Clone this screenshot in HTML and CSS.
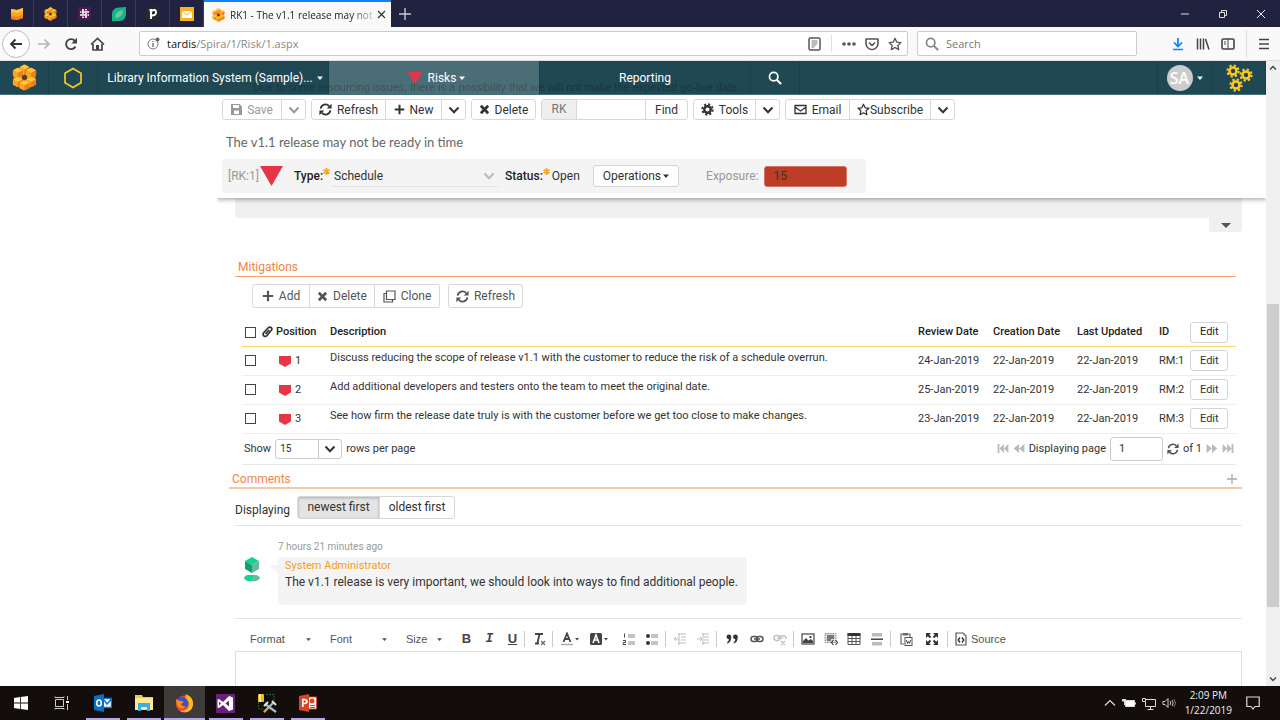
FILE: index.html
```html
<!DOCTYPE html>
<html lang="en">
<head>
<meta charset="utf-8">
<title>RK1 - The v1.1 release may not be ready in time</title>
<link rel="stylesheet" href="styles.css">
</head>
<body>
<svg class="defs" aria-hidden="true">
  <symbol id="cube" viewBox="0 0 12 12"><path fill="#ffc83a" d="M6 0l5.500 3L6 6 .5 3z"/><path fill="#fba41f" d="M.5 3L6 6v6L.5 9z"/><path fill="#f07d1c" d="M11.500 3L6 6v6l5.500-3z"/></symbol>
  <symbol id="hive" viewBox="0 0 30 32">
    <path fill="#f7941e" d="M15 2l13 7v15l-13 7-13-7V9z"/>
    <use href="#cube" x="8" y="0" width="14" height="13"/><use href="#cube" x="0" y="4" width="14" height="13"/><use href="#cube" x="16" y="4" width="14" height="13"/>
    <use href="#cube" x="0" y="15" width="14" height="13"/><use href="#cube" x="16" y="15" width="14" height="13"/><use href="#cube" x="8" y="19" width="14" height="13"/>
    <path fill="#5c3a1c" d="M15 12.500l3 1.700v3.600l-3 1.700-3-1.700v-3.600z"/>
  </symbol>
  <symbol id="chev" viewBox="0 0 12 12"><path d="M1.500 3.500L6 8.200l4.500-4.700" fill="none" stroke="currentColor" stroke-width="2"/></symbol>
  <symbol id="caret" viewBox="0 0 8 8"><path d="M0 2h8L4 6.500z" fill="currentColor"/></symbol>
  <symbol id="refresh" viewBox="0 0 16 16"><path d="M2 7a6 6 0 0 1 10.500-3.200M14 9a6 6 0 0 1-10.500 3.200" fill="none" stroke="currentColor" stroke-width="2.200"/><path d="M15.500.8v6h-6zM.5 15.200v-6h6z" fill="currentColor"/></symbol>
  <symbol id="plus" viewBox="0 0 12 12"><path d="M6 .8v10.400M.8 6h10.400" stroke="currentColor" stroke-width="2.200"/></symbol>
  <symbol id="cross" viewBox="0 0 12 12"><path d="M2 2l8 8M10 2l-8 8" stroke="currentColor" stroke-width="3"/></symbol>
  <symbol id="glass" viewBox="0 0 16 16"><circle cx="6.500" cy="6.500" r="4.800" fill="none" stroke="currentColor" stroke-width="2"/><path d="M10 10l5 5" stroke="currentColor" stroke-width="2.400"/></symbol>
  <symbol id="star" viewBox="0 0 16 16"><path d="M8 1.500l2 4.400 4.700.5-3.500 3.200 1 4.800L8 12l-4.200 2.400 1-4.800L1.300 6.400 6 5.900z" fill="none" stroke="currentColor" stroke-width="1.500" stroke-linejoin="round"/></symbol>
  <symbol id="ast" viewBox="0 0 8 8"><path d="M4 0v8M.5 2l7 4M7.500 2l-7 4" stroke="#f5a623" stroke-width="2"/></symbol>
  <symbol id="shield" viewBox="0 0 12 12"><path d="M0 1h12v7.500L6 12 0 8.500z" fill="#e83545"/></symbol>
  <symbol id="gear" viewBox="0 0 16 16"><circle cx="8" cy="8" r="4" fill="none" stroke="currentColor" stroke-width="3"/><circle cx="8" cy="8" r="6.400" fill="none" stroke="currentColor" stroke-width="2.400" stroke-dasharray="2.600 2.426"/></symbol>
  <symbol id="rewind" viewBox="0 0 12 10"><path d="M6 0v10L0 5zM12 0v10L6 5z" fill="currentColor"/></symbol>
  <symbol id="first" viewBox="0 0 12 10"><path d="M0 0h2v10H0zM7 0v10L2 5zM12 0v10L7 5z" fill="currentColor"/></symbol>
</svg>

<header class="tabs">
  <a class="pin" href="#" aria-label="Pinned: flag"><svg width="13" height="13" viewBox="0 0 13 13"><path fill="#fba41f" d="M1 2l6 1 6-2v10l-6 2-6-1z"/><path fill="#ffc540" d="M1 2l6 1 6-2v3L7 6 1 5z"/><path fill="#f47b20" d="M1 9l6 1 6-2v3l-6 2-6-1z"/></svg></a>
  <a class="pin" href="#" aria-label="Pinned: Spira"><svg width="13" height="14"><use href="#hive"/></svg></a>
  <a class="pin" href="#" aria-label="Pinned: Slack"><svg width="13" height="13" viewBox="0 0 13 13"><path fill="#50194f" d="M0 0h13v13H0z"/><path d="M5 2v5M8 6v5M2 8h5M6 5h5M8 2v1.500M5 9.500V11M2 5h1.500M9.500 8H11" stroke="#fff" stroke-width="1.700"/></svg></a>
  <a class="pin" href="#" aria-label="Pinned: leaf"><svg width="14" height="14" viewBox="0 0 14 14"><path fill="#12b58a" d="M0 14V7q0-6 7-6.500l7-.5v8q-1 6-7 6z"/><path fill="#6cc69d" d="M3 11Q3 4 11 3q0 8-8 8z"/></svg></a>
  <a class="pin" href="#" aria-label="Pinned: p"><svg width="14" height="14" viewBox="0 0 14 14"><path fill="#262a2d" d="M0 0h14v14H0z"/><path d="M5 12V3M3.500 3H6M5 4.200q5-2.800 5 1T5 8.500" fill="none" stroke="#fff" stroke-width="2"/></svg></a>
  <a class="pin" href="#" aria-label="Pinned: mail"><svg width="14" height="14" viewBox="0 0 14 14"><path fill="#f7b31b" d="M0 0h14v14H0z"/><path fill="#fff" d="M2 4h10v7H2z"/><path d="M2 4l5 4 5-4" fill="none" stroke="#f7b31b"/></svg></a>
  <div class="tab"><svg width="13" height="14"><use href="#hive"/></svg><span class="tab-title">RK1 - The v1.1 release may not</span><button class="bare" aria-label="Close tab"><svg width="9" height="9" viewBox="0 0 9 9"><path d="M1 1l7 7M8 1L1 8" stroke="#333" stroke-width="1.200"/></svg></button></div>
  <button class="bare newtab" aria-label="New tab"><svg width="12" height="12" viewBox="0 0 12 12"><path d="M6 0v12M0 6h12" stroke="#c8c8d2" stroke-width="1.400"/></svg></button>
  <div class="winbtns">
    <button class="bare" aria-label="Minimize"><svg width="10" height="10" viewBox="0 0 10 10"><path d="M1 5h8" stroke="#ddd"/></svg></button>
    <button class="bare" aria-label="Restore"><svg width="10" height="10" viewBox="0 0 10 10"><path d="M1.500 3.500h5v5h-5zM3.500 3V1.500h5v5H7" fill="none" stroke="#ddd"/></svg></button>
    <button class="bare" aria-label="Close"><svg width="10" height="10" viewBox="0 0 10 10"><path d="M1 1l8 8M9 1L1 9" stroke="#eee"/></svg></button>
  </div>
</header>

<div class="urlbar">
  <button class="bare back" aria-label="Back"><svg width="14" height="14" viewBox="0 0 14 14"><path d="M13 7H2M6.500 2.500L2 7l4.500 4.500" fill="none" stroke="#333" stroke-width="1.800"/></svg></button>
  <button class="bare navb" aria-label="Forward"><svg width="14" height="14" viewBox="0 0 14 14"><path d="M1 7h11M7.500 2.500L12 7l-4.500 4.500" fill="none" stroke="#b4b4b6" stroke-width="1.700"/></svg></button>
  <button class="bare navb" aria-label="Reload"><svg width="14" height="14" viewBox="0 0 14 14"><path d="M11.500 9.500A5 5 0 1 1 11 4" fill="none" stroke="#444" stroke-width="1.900"/><path d="M13 .8v5.700H7.300z" fill="#444"/></svg></button>
  <button class="bare navb" aria-label="Home"><svg width="15" height="14" viewBox="0 0 15 14"><path d="M1 7.500L7.500 1.500 14 7.500M3 7v6h9V7" fill="none" stroke="#444" stroke-width="1.700"/><path d="M6 8h3v5H6z" fill="#444"/></svg></button>
  <div class="field url">
    <svg width="13" height="13" viewBox="0 0 13 13"><circle cx="6" cy="7" r="5" fill="none" stroke="#777"/><path d="M6 6v4M6 4v1" stroke="#666" stroke-width="1.300"/><circle cx="10.500" cy="2.500" r="2" fill="#666"/></svg>
    <a class="address" href="#"><b>tardis</b>/Spira/1/Risk/1.aspx</a>
    <svg class="reader" width="13" height="14" viewBox="0 0 13 14"><rect x="1" y="1" width="11" height="12" rx="1.500" fill="none" stroke="#555" stroke-width="1.500"/><path d="M3.500 4h6M3.500 6h6M3.500 8h5M3.500 10h3" stroke="#777"/></svg>
    <span class="vsep"></span>
    <svg width="14" height="14" viewBox="0 0 14 14" fill="#555"><circle cx="2" cy="7" r="1.800"/><circle cx="7" cy="7" r="1.800"/><circle cx="12" cy="7" r="1.800"/></svg>
    <svg width="14" height="14" viewBox="0 0 14 14"><path d="M1 2h12v4.500a6 6 0 0 1-12 0zM4 5.500l3 3 3-3" fill="none" stroke="#555" stroke-width="1.600" stroke-linejoin="round"/></svg>
    <svg class="fav" width="14" height="14"><use href="#star"/></svg>
  </div>
  <label class="field search"><svg width="14" height="14"><use href="#glass"/></svg><input type="text" placeholder="Search" aria-label="Search"></label>
  <div class="tools">
    <svg width="14" height="14" viewBox="0 0 14 14"><path d="M7 1v8M3 5.500l4 4 4-4M2 12.500h10" fill="none" stroke="#0a84ff" stroke-width="1.700"/></svg>
    <svg width="14" height="14" viewBox="0 0 14 14"><path d="M1.500 1.500v11M4.500 1.500v11M7.500 1.500v11M9.500 2l3.500 10.500" fill="none" stroke="#444" stroke-width="1.500"/></svg>
    <svg width="14" height="14" viewBox="0 0 14 14"><rect x="1" y="2" width="12" height="10" rx="1.500" fill="none" stroke="#444" stroke-width="1.600"/><path d="M7 2v10M3 5h2M3 7h2" stroke="#444"/></svg>
    <span class="vline"></span>
    <svg width="12" height="14" viewBox="0 0 12 14"><path d="M1 2.500h10M1 7h10M1 11.500h10" stroke="#444" stroke-width="1.600"/></svg>
  </div>
</div>

<div class="app">
<div class="page">
  <nav class="nav">
    <a href="#" class="n-icon" aria-label="Home"><svg width="25" height="27"><use href="#hive"/></svg></a>
    <a href="#" class="n-icon" aria-label="Workspace"><svg width="20" height="22" viewBox="0 0 20 22"><path d="M10 1.500l8 4.700v9.600l-8 4.700-8-4.700V6.200z" fill="none" stroke="#f9c922" stroke-width="1.700"/></svg></a>
    <a href="#" class="n-proj">Library Information System (Sample)... <svg width="6" height="6"><use href="#caret"/></svg></a>
    <a href="#" class="n-main on"><svg class="tri" width="14" height="12" viewBox="0 0 14 12"><path fill="#e83545" d="M0 0h14L7 12z"/></svg>Risks<svg width="6" height="6"><use href="#caret"/></svg></a>
    <a href="#" class="n-main">Reporting</a>
    <a href="#" class="n-icon" aria-label="Search"><svg width="14" height="14"><use href="#glass"/></svg></a>
    <a href="#" class="n-user"><span class="avatar">SA</span><svg width="6" height="6"><use href="#caret"/></svg></a>
    <a href="#" class="n-gears" aria-label="Administration"><svg width="28" height="28" viewBox="0 0 28 28" color="#f9c922"><use href="#gear" x="1" y="0" width="14" height="14"/><use href="#gear" x="14" y="4" width="14" height="14"/><use href="#gear" x="4" y="14" width="14" height="14"/></svg></a>
    <span class="ghost">Due to some resourcing issues, there is a possibility that we will not make the expected go-live date.</span>
  </nav>

  <div class="body">
    <aside class="side"></aside>
    <main class="main">
      <div class="sticky">
        <div class="bar">
          <div class="group off"><button class="w58"><svg width="11" height="11" viewBox="0 0 11 11"><path fill="currentColor" fill-rule="evenodd" d="M0 0h8.500L11 2.500V11H0zM2 1v3h6V1zM3 6.500h5V10H3z"/></svg>Save</button><button class="drop" aria-label="More save options"><svg width="12" height="12"><use href="#chev"/></svg></button></div>
          <div class="group"><button class="w73"><svg width="13" height="13"><use href="#refresh"/></svg>Refresh</button><button class="w56"><svg width="11" height="11"><use href="#plus"/></svg>New</button><button class="drop" aria-label="More new options"><svg width="12" height="12"><use href="#chev"/></svg></button></div>
          <div class="group"><button class="w63"><svg width="11" height="11"><use href="#cross"/></svg>Delete</button></div>
          <div class="group"><label class="rk" for="rk">RK</label><input id="rk" class="rk-in" type="text"><button class="w42">Find</button></div>
          <div class="group"><button class="w61"><svg width="13" height="13"><use href="#gear"/></svg>Tools</button><button class="drop" aria-label="More tools"><svg width="12" height="12"><use href="#chev"/></svg></button></div>
          <div class="group"><button class="w63"><svg width="13" height="11" viewBox="0 0 13 11"><path d="M1 1.500h11v8H1zM1 3l5.500 4L12 3" fill="none" stroke="currentColor" stroke-width="1.300"/></svg>Email</button><button class="w81 tight"><svg width="13" height="13"><use href="#star"/></svg>Subscribe</button><button class="drop" aria-label="More subscribe options"><svg width="12" height="12"><use href="#chev"/></svg></button></div>
        </div>
        <h1 class="title">The v1.1 release may not be ready in time</h1>
        <div class="info">
          <span class="code">[RK:1]</span>
          <svg class="risk" width="23" height="20" viewBox="0 0 23 20"><path fill="#e83545" d="M0 0h23L11.500 20z"/></svg>
          <label class="lab" for="type">Type:<svg width="7" height="7"><use href="#ast"/></svg></label>
          <span class="pick type"><select id="type"><option>Schedule</option></select><svg width="12" height="12"><use href="#chev"/></svg></span>
          <span class="lab">Status:<svg width="7" height="7"><use href="#ast"/></svg></span>
          <span class="open">Open</span>
          <button class="solo ops">Operations <svg width="6" height="6"><use href="#caret"/></svg></button>
          <label class="explab" for="exposure">Exposure:</label>
          <input id="exposure" class="exposure" type="text" value="15" readonly>
        </div>
      </div>

      <div class="panel"></div>
      <div class="panel-tab"><button class="bare" aria-label="Expand"><svg width="10" height="8" viewBox="0 0 10 8"><path d="M0 2h10L5 7z" fill="#555"/></svg></button></div>

      <section class="mitigations">
        <h2>Mitigations</h2>
        <div class="bar mbar">
          <div class="group"><button class="w56"><svg width="12" height="12"><use href="#plus"/></svg>Add</button><button class="w65"><svg width="11" height="11"><use href="#cross"/></svg>Delete</button><button class="w65"><svg width="13" height="13" viewBox="0 0 13 13"><path d="M3.500 1h8.500v8.500H3.500zM3.500 3.500H1V12h8.500V9.500" fill="none" stroke="currentColor" stroke-width="1.200"/></svg>Clone</button></div>
          <div class="group"><button class="w73"><svg width="13" height="13"><use href="#refresh"/></svg>Refresh</button></div>
        </div>
        <table>
          <colgroup><col class="c1"><col class="c2"><col class="c3"><col><col class="c5"><col class="c6"><col class="c7"><col class="c8"><col class="c9"></colgroup>
          <thead><tr>
            <th><input type="checkbox" aria-label="Select all"></th>
            <th><svg width="11" height="12" viewBox="0 0 11 12"><path d="M9.500 4L5 9.500Q3.500 11 2 10T1.500 7L6 2q1.500-1.500 3-.5T9.500 4M3.500 8L7 4" fill="none" stroke="#333" stroke-width="1.700"/></svg></th>
            <th>Position</th><th>Description</th><th>Review Date</th><th>Creation Date</th><th>Last Updated</th><th>ID</th><th><button class="solo">Edit</button></th>
          </tr></thead>
          <tbody>
            <tr><td><input type="checkbox" aria-label="Select 1"></td><td></td><td><svg class="shield" width="12" height="12"><use href="#shield"/></svg>1</td><td class="desc">Discuss reducing the scope of release v1.1 with the customer to reduce the risk of a schedule overrun.</td><td>24-Jan-2019</td><td>22-Jan-2019</td><td>22-Jan-2019</td><td>RM:1</td><td><button class="solo">Edit</button></td></tr>
            <tr><td><input type="checkbox" aria-label="Select 2"></td><td></td><td><svg class="shield" width="12" height="12"><use href="#shield"/></svg>2</td><td class="desc">Add additional developers and testers onto the team to meet the original date.</td><td>25-Jan-2019</td><td>22-Jan-2019</td><td>22-Jan-2019</td><td>RM:2</td><td><button class="solo">Edit</button></td></tr>
            <tr><td><input type="checkbox" aria-label="Select 3"></td><td></td><td><svg class="shield" width="12" height="12"><use href="#shield"/></svg>3</td><td class="desc">See how firm the release date truly is with the customer before we get too close to make changes.</td><td>23-Jan-2019</td><td>22-Jan-2019</td><td>22-Jan-2019</td><td>RM:3</td><td><button class="solo">Edit</button></td></tr>
          </tbody>
        </table>
        <div class="pager">
          <label for="rows">Show</label>
          <span class="pick rows"><select id="rows"><option>15</option></select><svg width="12" height="12"><use href="#chev"/></svg></span>
          <span>rows per page</span>
          <div class="pages">
            <svg class="dim" width="12" height="9"><use href="#first"/></svg><svg class="dim" width="12" height="9"><use href="#rewind"/></svg>
            <label for="pg">Displaying page</label><input id="pg" type="text" value="1">
            <svg width="12" height="12"><use href="#refresh"/></svg><span>of 1</span>
            <svg class="dim flip" width="12" height="9"><use href="#rewind"/></svg><svg class="dim flip" width="12" height="9"><use href="#first"/></svg>
          </div>
        </div>
      </section>

      <section class="comments">
        <div class="chead"><h2>Comments</h2><button class="bare" aria-label="Add comment"><svg width="10" height="10" viewBox="0 0 10 10"><path d="M5 0v10M0 5h10" stroke="#aaa" stroke-width="1.300"/></svg></button></div>
        <div class="order"><span>Displaying</span><div class="group"><button class="pressed w81">newest first</button><button class="w75">oldest first</button></div></div>
        <article class="comment">
          <svg class="face" width="18" height="25" viewBox="0 0 18 25"><path fill="#16d19a" d="M9 0l7 4-7 4-7-4z"/><path fill="#0ba371" d="M2 4l7 4v8l-7-4z"/><path fill="#67ba92" d="M16 4L9 8v8l7-4z"/><path fill="#16d19a" d="M1 21q1-3 4-3h7l-3 6q-6 1-8-3z"/><path fill="#67ba92" d="M12 18q4 0 5 3-3 4-8 3z"/></svg>
          <div>
            <time>7 hours 21 minutes ago</time>
            <div class="bubble"><a href="#">System Administrator</a><p>The v1.1 release is very important, we should look into ways to find additional people.</p></div>
          </div>
        </article>
        <div class="ck">
          <select class="s-format" aria-label="Format"><option>Format</option></select><svg class="ca" width="5" height="5"><use href="#caret"/></svg>
          <select class="s-font" aria-label="Font"><option>Font</option></select><svg class="ca" width="5" height="5"><use href="#caret"/></svg>
          <select class="s-size" aria-label="Size"><option>Size</option></select><svg class="ca" width="5" height="5"><use href="#caret"/></svg>
          <div class="cg lead"><button class="b">B</button><button class="i">I</button><button class="u">U</button></div>
          <div class="cg"><button aria-label="Remove format"><svg viewBox="0 0 14 14"><path d="M3 2h8M7.500 2L5.500 11M3 11.500h4" fill="none" stroke="#444" stroke-width="1.800"/><path d="M9 9l4 4M13 9l-4 4" stroke="#666" stroke-width="1.200"/></svg></button></div>
          <div class="cg plain"><button class="col" aria-label="Text color"><svg class="wide" viewBox="0 0 20 14"><path d="M3.500 10L7 1.500 10.500 10M4.500 7h5" fill="none" stroke="#444" stroke-width="1.800"/><path d="M1 12.500h12" stroke="#aaa" stroke-width="1.500"/><path d="M15 6h4l-2 2.500z" fill="#444"/></svg></button><button class="col" aria-label="Background color"><svg class="wide" viewBox="0 0 20 14"><rect x="1" y="1" width="12" height="12" rx="1.500" fill="#444"/><path d="M4 11l3-8 3 8M5 8h4" fill="none" stroke="#fff" stroke-width="1.500"/><path d="M15 6h4l-2 2.500z" fill="#444"/></svg></button></div>
          <div class="cg"><button aria-label="Numbered list"><svg viewBox="0 0 14 14"><path d="M6 3h7M6 5h7M6 10h7M6 12h7" stroke="#888" stroke-width="1.200"/><path d="M2.500 1.500v4M1 8.500h2.500v2H1.200v2H4" fill="none" stroke="#444"/></svg></button><button aria-label="Bulleted list"><svg viewBox="0 0 14 14"><path d="M6 3h7M6 5h7M6 10h7M6 12h7" stroke="#888" stroke-width="1.200"/><circle cx="3" cy="4" r="2" fill="#333"/><circle cx="3" cy="11" r="2" fill="#333"/></svg></button></div>
          <div class="cg"><button class="faint" aria-label="Outdent"><svg viewBox="0 0 14 14"><path d="M5 2h8M8 5h5M8 8h5M5 11h8M1 7h5M3 5L1 7l2 2M6 1v12" fill="none" stroke="#444"/></svg></button><button class="faint" aria-label="Indent"><svg viewBox="0 0 14 14"><path d="M6 2h7M8 5h5M8 8h5M6 11h7M1 7h5M4 5l2 2-2 2M7 1v12" fill="none" stroke="#444"/></svg></button></div>
          <div class="cg"><button class="roomy" aria-label="Quote"><svg viewBox="0 0 14 14"><path fill="#333" d="M1.500 5a2.400 2.400 0 1 1 4.800 0Q6.300 10 2.500 11.500L2 10.500Q4 9 3.800 7.300 1.500 7 1.500 5zM8 5a2.400 2.400 0 1 1 4.800 0Q12.800 10 9 11.500L8.500 10.500Q10.500 9 10.300 7.300 8 7 8 5z"/></svg></button><button aria-label="Link"><svg viewBox="0 0 14 14"><rect x="1" y="4.500" width="6.500" height="5" rx="2.500" fill="none" stroke="#555" stroke-width="1.500"/><rect x="6.500" y="4.500" width="6.500" height="5" rx="2.500" fill="none" stroke="#555" stroke-width="1.500"/><path d="M4 7h6" stroke="#555" stroke-width="1.500"/></svg></button><button class="faint" aria-label="Unlink"><svg viewBox="0 0 14 14"><rect x="1" y="3.500" width="6" height="5" rx="2.500" fill="none" stroke="#555" stroke-width="1.500"/><path d="M7 4h4q2 0 2 3M4 6h6M8 9l4 4M12 9l-4 4" fill="none" stroke="#555" stroke-width="1.500"/></svg></button></div>
          <div class="cg"><button aria-label="Image"><svg viewBox="0 0 14 14"><rect x="1" y="2" width="12" height="10" fill="none" stroke="#444" stroke-width="1.200"/><path d="M2 11V9l3-3 2.500 2.500L10 7l2 2v2zM8.500 4h2v2h-2z" fill="#444"/></svg></button><button aria-label="Div container"><svg viewBox="0 0 14 14"><rect x="1" y="1.500" width="11" height="9" fill="#ddd" stroke="#888" stroke-dasharray="1.500 1"/><path d="M3 4h7M3 6h7M3 8h4" stroke="#555" stroke-width="1.300"/><path d="M9.500 8L7.500 10.500l2 2.500M11.500 8l2 2.500-2 2.500" fill="none" stroke="#444" stroke-width="1.200"/></svg></button><button aria-label="Table"><svg viewBox="0 0 14 14"><path d="M.5 1h13v3H.5z" fill="#333"/><path d="M1 1.500v11h12v-11M1 6.500h12M1 9.500h12M5 4v8M9 4v8" fill="none" stroke="#555"/></svg></button><button aria-label="Horizontal line"><svg viewBox="0 0 14 14"><path d="M2 1h10v3.500H2zM2 10h10v3.500H2z" fill="#bbb"/><path d="M1 7.200h12" stroke="#444" stroke-width="1.500"/></svg></button></div>
          <div class="cg"><button class="roomy" aria-label="Paste from Word"><svg viewBox="0 0 14 14"><path d="M5 12H2V2h9v3M4.500 1.500h4v1.500h-4z" fill="none" stroke="#666" stroke-width="1.200"/><rect x="6" y="5.500" width="7" height="8" fill="#fff" stroke="#555"/><path d="M7.500 8l1 3.500 1-2 1 2 1-3.500" fill="none" stroke="#444"/></svg></button><button class="roomy" aria-label="Maximize"><svg viewBox="0 0 14 14"><path d="M1 1h5L1 6zM13 1v5L8 1zM1 13V8l5 5zM13 13H8l5-5z" fill="#333"/><path d="M2 2l3.500 3.500M12 2L8.500 5.500M2 12l3.500-3.500M12 12L8.500 8.500" stroke="#333" stroke-width="2"/></svg></button></div>
          <div class="cg last"><button class="source"><svg viewBox="0 0 14 14"><path d="M2 1h7l3 3v9H2z" fill="none" stroke="#555" stroke-width="1.200"/><path d="M6 5.500L4.200 8 6 10.500M8 5.500L9.800 8 8 10.500" fill="none" stroke="#333" stroke-width="1.400"/></svg>Source</button></div>
        </div>
        <textarea aria-label="New comment"></textarea>
      </section>
    </main>
  </div>
</div>
<div class="scroll"><svg width="8" height="8" viewBox="0 0 8 8"><path d="M1 5.500l3-3 3 3" fill="none" stroke="#444" stroke-width="1.400"/></svg><div class="track"><div class="thumb"></div></div><svg width="8" height="8" viewBox="0 0 8 8"><path d="M1 2.500l3 3 3-3" fill="none" stroke="#444" stroke-width="1.400"/></svg></div>
</div>

<footer class="taskbar">
  <button class="task" aria-label="Start"><svg width="14" height="14" viewBox="0 0 14 14"><path fill="#fff" d="M0 2l6-1v5.600H0zM6.800.9L14 0v6.600H6.800zM0 7.400h6V13l-6-1zM6.800 7.400H14V14l-7.200-1z"/></svg></button>
  <button class="task" aria-label="Task view"><svg width="16" height="14" viewBox="0 0 16 14"><path d="M1.500 3.500h8v7h-8zM1 .5v1h9v-1M1 13.500v-1h9v1M13.500 0v4M13.500 8v6" fill="none" stroke="#ccc"/><path d="M12 5h3v2h-3z" fill="#eee"/></svg></button>
  <button class="task run" aria-label="Outlook"><svg width="18" height="18" viewBox="0 0 18 18"><path fill="#fff" d="M9 4h9v10H9z"/><path d="M9 4.500h8.500v9H9M10 6l3 4 4.500-5" fill="none" stroke="#0f74c9" stroke-width="1.500"/><path fill="#0b6fc4" d="M0 2l10-2v18L0 16z"/><ellipse cx="5" cy="9" rx="2.300" ry="3" fill="none" stroke="#fff" stroke-width="1.600"/></svg></button>
  <button class="task run" aria-label="File Explorer"><svg width="18" height="16" viewBox="0 0 18 16"><path fill="#f0c851" d="M0 0h7l1 2h10v12H0z"/><path fill="#ffe798" d="M0 3h18v12H0z"/><path fill="#38aee5" d="M3 8h12v8h-3v-4H6v4H3z"/></svg></button>
  <button class="task run active" aria-label="Firefox"><svg width="19" height="19" viewBox="0 0 19 19"><circle cx="9.500" cy="10" r="8.500" fill="#f5482d"/><path d="M10 0q7 2 8 8 .5 8-6 10-4 1-7-1 8 0 9-6 0-5-4-8 2-1 0-3z" fill="#ffbd22"/><path d="M3 4q4-3 7 0l3 4q1 5-4 6-5 0-5-5z" fill="#3454c8"/><path d="M1 5q2 2 5 2l3 1-3 2q1 3 5 2-2 3-6 2-4-2-4-9z" fill="#ff8a1b"/></svg></button>
  <button class="task run" aria-label="Visual Studio"><svg width="19" height="19" viewBox="0 0 19 19"><path fill="#68217a" d="M0 0h19v19H0z"/><path fill="#fff" fill-rule="evenodd" d="M1.500 5.500L3 5l4 3 6-6 4 1.500v12L13 17l-6-6-4 3-1.500-.5zM3 7.500v4L5 9.500zM9.500 9.500L13 12.500v-6z"/></svg></button>
  <button class="task run" aria-label="SQL tools"><svg width="20" height="20" viewBox="0 0 20 20"><path d="M9 1.500h8V8M1.500 9v7H6" fill="none" stroke="#24642d" stroke-dasharray="2 1"/><rect x="1" y="1" width="6" height="8" rx="1" fill="#f4b62b"/><path fill="#ffe793" d="M2 1h2v8H2z"/><path d="M8 11l11 8M7 19l9-9" stroke="#a7bbc9" stroke-width="2.200"/><path d="M7 13l4-4M15 8l4 4" stroke="#dce6ee" stroke-width="2"/><path d="M7 19l4-4" stroke="#d69d45" stroke-width="2"/></svg></button>
  <button class="task run" aria-label="PowerPoint"><svg width="18" height="18" viewBox="0 0 18 18"><path fill="#fff" stroke="#d9472b" d="M8 3h9.500v12H8z"/><path fill="#d9472b" d="M11 11h5v1h-5zM11 13h5v1h-5z"/><circle cx="13" cy="7" r="2.500" fill="#d9472b"/><path fill="#d24726" d="M0 2l10-2v18L0 16z"/><path d="M3.800 13V5.500h1.700q2.500.3 2.500 2t-2.500 2H4" fill="none" stroke="#fff" stroke-width="1.600"/></svg></button>
  <div class="tray">
    <svg width="12" height="12" viewBox="0 0 12 12"><path d="M1 8.500l5-5 5 5" fill="none" stroke="#ddd" stroke-width="1.200"/></svg>
    <svg width="14" height="12" viewBox="0 0 14 12"><path d="M3.500 3.500h9v6h-9z" fill="#fff" stroke="#ddd"/><path d="M13 5.500h1v2h-1zM0 2h4v2.500H0z" fill="#ddd"/><path d="M2.500 4v4" stroke="#ddd"/></svg>
    <svg width="14" height="13" viewBox="0 0 14 13"><path d="M4 2.500h9.500v7H3.500V5M8.500 10v2M5.500 12.500h6M.5 1.500h3v3h-3z" fill="none" stroke="#ddd"/></svg>
    <svg width="14" height="12" viewBox="0 0 14 12"><path d="M1 4.500h2l3-3v9l-3-3H1zM8 4q1.500 2 0 4M10 3q2.500 3 0 6" fill="none" stroke="#ccc"/><path d="M12 2q3 4 0 8" fill="none" stroke="#777"/></svg>
    <div class="clock"><span>2:09 PM</span><span>1/22/2019</span></div>
    <svg width="14" height="14" viewBox="0 0 14 14"><path d="M.8 1h12.400v9.500H9L7 13l-2-2.500H.8z" fill="none" stroke="#ddd" stroke-width="1.200"/></svg>
  </div>
</footer>
</body>
</html>
```

FILE: styles.css
```css
* { box-sizing: border-box; }
body { margin: 0; height: 100vh; display: flex; flex-direction: column; overflow: hidden; background: #fff; color: #333; font: 12px/16px Roboto, "Noto Sans", sans-serif; }
button, input, select, textarea { font: inherit; color: inherit; margin: 0; }
button { padding: 0; }
svg { flex: none; display: block; }
a { color: inherit; text-decoration: none; }
h1, h2, p { margin: 0; font-weight: 400; }
select { appearance: none; border: 0; background: none; padding: 0; width: 100%; }
.defs { position: absolute; width: 0; height: 0; }
.bare { border: 0; background: none; display: flex; align-items: center; justify-content: center; }

/* Browser chrome */
.tabs { flex: none; height: 27px; background: #20223f; display: flex; font: 10px/16px "Open Sans", sans-serif; }
.pin { width: 34px; display: flex; align-items: center; justify-content: center; border-right: 1px solid #3b3d58; }
.tab { width: 187px; display: flex; align-items: center; gap: 5px; padding: 0 9px 0 8px; background: #f9f9fa; border-top: 2px solid #0a84ff; color: #222; }
.tab-title { flex: 1; white-space: nowrap; mask-image: linear-gradient(to right, #000 85%, transparent 105%); }
.newtab { width: 28px; }
.winbtns { margin-left: auto; display: flex; }
.winbtns button { width: 38px; }
.urlbar { flex: none; height: 34px; background: #f9f9fa; display: flex; align-items: center; padding-left: 2px; border-bottom: 1px solid #e0e0e0; font: 11px/16px "Open Sans", sans-serif; }
.back { width: 28px; height: 28px; border: 1px solid #bbb; border-radius: 50%; background: #fff; }
.navb { width: 27px; height: 27px; }
.field { display: flex; align-items: center; height: 25px; background: #fff; border: 1px solid #ccc; border-radius: 2px; color: #888; }
.url { flex: 1; margin-left: 28px; padding: 0 5px 0 7px; gap: 9px; }
.address { flex: 1; margin-left: -2px; }
.address b { color: #111; font-weight: 400; }
.vsep { width: 1px; height: 17px; background: #e0e0e0; margin: 0 1px; }
.fav { color: #555; }
.search { width: 220px; margin-left: 9px; padding-left: 7px; gap: 5px; }
.search input { border: 0; outline: 0; background: none; flex: 1; min-width: 0; }
.search input::placeholder { color: #777; }
.tools { width: 143px; padding: 0 10px 0 34px; display: flex; align-items: center; justify-content: space-between; height: 100%; }
.vline { width: 1px; height: 28px; background: #ddd; }

/* Application */
.app { flex: 1; min-height: 0; display: flex; overflow: hidden; }
.page { flex: 1; min-width: 0; overflow: hidden; display: flex; flex-direction: column; }
.nav { position: relative; flex: none; height: 34px; background: #1f4854; color: #fff; display: flex; border-bottom: 1px solid #437079; }
.nav > a { display: flex; align-items: center; justify-content: center; gap: 4px; border-right: 1px solid #16404b; white-space: nowrap; }
.n-icon { width: 49px; }
.n-proj { width: 231px; padding-left: 4px; }
.n-main { width: 211px; }
.nav .on { background: #4b6e76; padding-left: 5px; gap: 3px; }
.tri { margin-right: 3px; }
.n-user { width: 55px; margin-left: auto; border-left: 1px solid #16404b; }
.avatar { width: 26px; height: 26px; border-radius: 50%; background: #ccc; font: 600 16px/26px "Open Sans", sans-serif; text-align: center; }
.n-gears { width: 54px; }
.ghost { position: absolute; left: 253px; top: 19px; height: 14px; overflow: hidden; font: 11px/14px "Liberation Sans", sans-serif; color: #000; opacity: .25; white-space: nowrap; }
.body { display: flex; flex: none; }
.side { width: 217px; flex: none; }
.main { flex: 1; min-width: 0; }

.sticky { position: relative; height: 103px; padding: 4px 5px 0; background: #fff; box-shadow: 0 2px 4px rgba(0,0,0,.3); clip-path: inset(0 0 -8px 0); }
.bar { display: flex; gap: 5px; height: 21px; }
.group { display: flex; border: 1px solid #d8d8d8; border-radius: 3px; overflow: hidden; background: #fff; }
.group button { display: flex; align-items: center; justify-content: center; gap: 5px; border-width: 0; background: none; white-space: nowrap; }
.group > button + button, .group > input + button { border-left: 1px solid #d8d8d8; }
.group .tight { gap: 0; }
.off { color: #999; }
.group .drop { width: 24px; }
.w42 { width: 42px; } .w56 { width: 56px; } .w58 { width: 58px; } .w61 { width: 61px; } .w63 { width: 63px; }
.w65 { width: 65px; } .w73 { width: 73px; } .w75 { width: 75px; } .w81 { width: 81px; }
.rk { width: 34px; background: #eee; color: #777; text-align: center; line-height: 19px; }
.rk-in { width: 69px; border: 0; border-left: 1px solid #d8d8d8; }
.title { font: 13px/18px Lato, sans-serif; color: #666; margin: 13px 0 8px 4px; }
.info { display: flex; align-items: center; width: 644px; height: 34px; background: #f4f4f4; border-radius: 3px; padding-left: 6px; }
.code { color: #999; width: 32px; }
.risk { margin-right: 11px; }
.lab { display: flex; font-weight: 500; color: #222; }
.pick { display: flex; align-items: center; }
.pick select { flex: 1; min-width: 0; }
.type { width: 166px; height: 22px; margin: 0 7px 0 2px; padding: 0 3px 0 2px; border-bottom: 1px solid #e4e4e4; }
.type svg { color: #bbb; }
.open { margin: 0 13px 0 2px; }
.solo { height: 21px; padding: 0 9px; background: #fff; border: 1px solid #d4d4d4; border-radius: 3px; }
.ops { display: flex; align-items: center; gap: 2px; height: 22px; }
.explab { margin: 0 6px 0 27px; color: #999; }
.exposure { width: 83px; height: 21px; background: #be3d26; border: 1px solid #cf7565; border-radius: 3px; padding: 0 8px; }

.panel { height: 20px; margin: 0 24px 0 18px; background: #f0f0f0; border-radius: 0 0 0 3px; }
.panel-tab { display: flex; justify-content: flex-end; margin-right: 24px; }
.panel-tab button { width: 33px; height: 14px; background: #f0f0f0; border-radius: 0 0 3px 3px; }
h2 { font-size: 12px; color: #f08549; }
.mitigations { margin: 27px 30px 0 18px; }
.mitigations h2 { padding-left: 3px; height: 18px; border-bottom: 1px solid #f8a26c; }
.mbar { height: 24px; margin: 7px 0 0 17px; gap: 8px; color: #555; }
table { width: calc(100% - 7px); margin: 11px 0 0 7px; table-layout: fixed; border-collapse: collapse; font-size: 11px; }
th { text-align: left; font-weight: 500; color: #222; }
th, td { height: 29px; padding: 0; vertical-align: middle; white-space: nowrap; border-bottom: 1px solid #eee; }
th { height: 27px; border-color: #fcd869; }
td .solo, th .solo { display: block; width: 38px; font-weight: 400; }
.c1 { width: 20px; } .c2 { width: 14px; } .c3 { width: 54px; } .c5 { width: 75px; } .c6 { width: 84px; } .c7 { width: 82px; } .c8 { width: 31px; } .c9 { width: 46px; }
td.desc { padding-bottom: 6px; }
input[type=checkbox] { appearance: none; display: block; width: 11px; height: 11px; margin-left: 3px; border: 1px solid #444; background: #fff; }
.shield { display: inline-block; vertical-align: -3px; margin: 0 4px 0 3px; }
.pager { display: flex; align-items: center; gap: 4px; height: 31px; margin-left: 7px; padding-left: 2px; border-bottom: 1px solid #e8e8e8; font-size: 11px; }
.rows { width: 67px; height: 20px; border: 1px solid #ccc; border-radius: 3px; padding: 0 5px 0 4px; font-size: 10px; }
.rows select { align-self: stretch; border-right: 1px solid #ccc; margin-right: 5px; }
.pages { display: flex; align-items: center; gap: 4px; margin-left: auto; padding-right: 2px; }
.pages input { width: 53px; height: 24px; border: 1px solid #ccc; border-radius: 3px; padding: 0 8px; }
.pages svg { color: #555; }
.pages .dim { color: #bbb; }
.flip { transform: rotate(180deg); }

.comments { margin: 0 24px 0 12px; }
.chead { display: flex; justify-content: space-between; height: 24px; padding: 6px 5px 0 3px; border-bottom: 2px solid #fac7a5; }
.order { display: flex; gap: 7px; align-items: flex-end; margin-left: 6px; height: 37px; padding-bottom: 7px; border-bottom: 1px solid #e4e4e4; }
.order .group { height: 23px; margin-bottom: -1px; }
.group .pressed { background: #e4e4e4; box-shadow: inset 0 1px 3px rgba(0,0,0,.25); }
.comment { display: flex; gap: 17px; height: 93px; margin-left: 6px; padding: 13px 0 0 8px; border-bottom: 1px solid #e4e4e4; }
.face { margin-top: 18px; }
time { display: block; font-size: 10px; color: #999; height: 18px; }
.bubble { position: relative; height: 48px; padding: 1px 9px 1px 7px; background: #f4f4f4; border-radius: 4px; }
.bubble::before { content: ""; position: absolute; left: -9px; top: 8px; border: solid transparent; border-width: 0 0 9px 10px; border-top: 0; border-right: 10px solid #f4f4f4; border-left: 0; }
.bubble a { display: block; font-size: 11px; color: #f39c1f; }
.ck { display: flex; align-items: center; margin-left: 6px; padding-left: 15px; height: 32px; padding-top: 9px; font: 11px/14px "Liberation Sans", sans-serif; color: #555; }
.s-format { width: 56px; } .s-font { width: 52px; } .s-size { width: 31px; }
.ca { margin-right: 19px; }
.cg { display: flex; align-items: center; padding: 0 2px; height: 16px; border-right: 1px solid #ccc; }
.lead { margin-left: -6px; padding: 0; }
.plain { border: 0; }
.last { border: 0; padding-left: 6px; }
.cg button { width: 23px; display: flex; justify-content: center; align-items: center; border: 0; background: none; }
.cg svg { width: 14px; height: 14px; }
.cg svg.wide { width: 20px; }
.cg .col { width: 29px; }
.cg .b, .cg .i, .cg .u { font: 700 13px/14px "Liberation Sans", sans-serif; color: #444; }
.cg .i { font-style: italic; font-family: "Liberation Mono", monospace; }
.cg .u { text-decoration: underline; }
.cg .faint { opacity: .35; }
.cg .roomy { width: 26px; }
.cg .source { width: auto; gap: 3px; }
.comments textarea { display: block; width: calc(100% - 6px); margin-left: 6px; height: 60px; border: 1px solid #ddd; resize: none; }

.scroll { width: 14px; flex: none; background: #f0f0f0; display: flex; flex-direction: column; align-items: center; padding: 3px 0; }
.track { flex: 1; width: 100%; padding: 232px 1px 68px; display: flex; }
.thumb { flex: 1; background: #cdcdcd; }

/* Taskbar */
.taskbar { flex: none; height: 34px; background: #130e0b; color: #eee; display: flex; }
.task { width: 41px; display: flex; align-items: center; justify-content: center; border: 0; background: none; }
.run { background: linear-gradient(#b0a8e8, #b0a8e8) center bottom / 34px 2px no-repeat; }
.active { background: linear-gradient(#b0a8e8, #b0a8e8) center bottom / 100% 2px no-repeat #3e3b39; }
.tray { margin-left: auto; display: flex; align-items: center; gap: 6px; padding-right: 20px; }
.clock { display: flex; flex-direction: column; align-items: center; font: 10px/15px "Open Sans", sans-serif; margin: 0 8px 0 3px; }
```
